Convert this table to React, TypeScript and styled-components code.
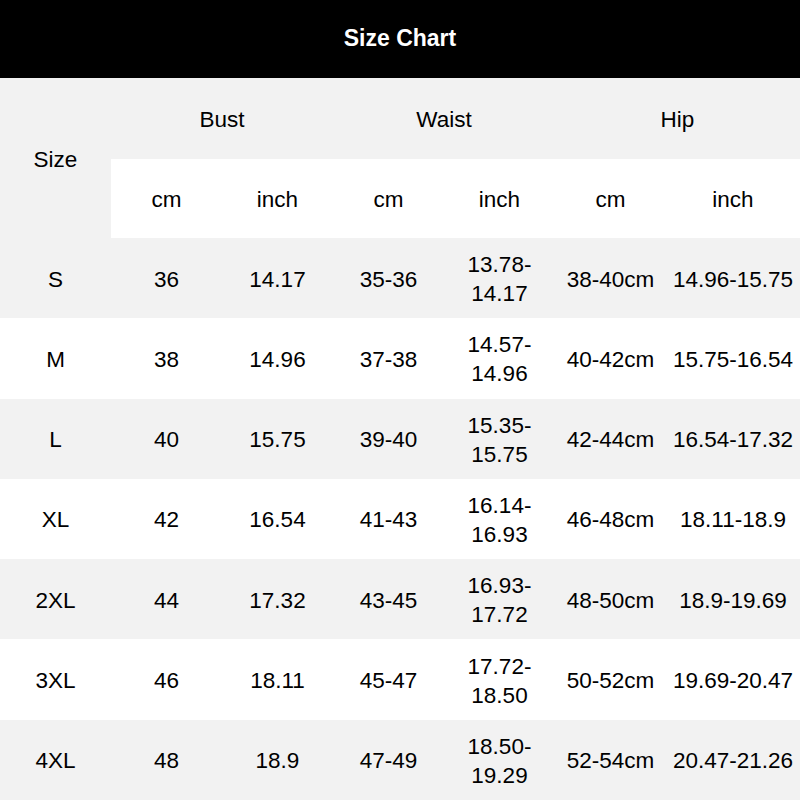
import React from "react";
import styled, { createGlobalStyle } from "styled-components";

const GlobalStyle = createGlobalStyle`
  html, body { margin: 0; padding: 0; background: #ffffff; }
  body { font-family: "Liberation Sans", Arial, sans-serif; color: #000; }
`;

const Page = styled.div`
  width: 800px;
  height: 800px;
  display: flex;
  flex-direction: column;
  overflow: hidden;
`;

const TitleBar = styled.div`
  height: 78px;
  flex: 0 0 78px;
  background: #000;
  color: #fff;
  display: flex;
  align-items: center;
  justify-content: center;
  font-size: 23px;
  font-weight: 700;
  padding-bottom: 1px;
  box-sizing: border-box;
`;

const Table = styled.div`
  flex: 1;
  display: grid;
  grid-template-columns: repeat(6, 111px) 134px;
  grid-template-rows: 81px 79px repeat(7, 1fr);
`;

const Cell = styled.div<{ $shade: boolean; $span?: number; $rows?: number }>`
  background: ${(p) => (p.$shade ? "#f2f2f2" : "#ffffff")};
  grid-column: span ${(p) => p.$span ?? 1};
  grid-row: span ${(p) => p.$rows ?? 1};
  display: flex;
  align-items: center;
  justify-content: center;
  text-align: center;
  font-size: 22.5px;
  line-height: 29px;
  white-space: nowrap;
  padding-top: 2px;
  box-sizing: border-box;
`;

const Lines = styled.div`
  display: flex;
  flex-direction: column;
  align-items: center;
`;

type Row = {
  size: string;
  bustCm: string;
  bustIn: string;
  waistCm: string;
  waistIn: [string, string];
  hipCm: string;
  hipIn: string;
};

const rows: Row[] = [
  { size: "S", bustCm: "36", bustIn: "14.17", waistCm: "35-36", waistIn: ["13.78-", "14.17"], hipCm: "38-40cm", hipIn: "14.96-15.75" },
  { size: "M", bustCm: "38", bustIn: "14.96", waistCm: "37-38", waistIn: ["14.57-", "14.96"], hipCm: "40-42cm", hipIn: "15.75-16.54" },
  { size: "L", bustCm: "40", bustIn: "15.75", waistCm: "39-40", waistIn: ["15.35-", "15.75"], hipCm: "42-44cm", hipIn: "16.54-17.32" },
  { size: "XL", bustCm: "42", bustIn: "16.54", waistCm: "41-43", waistIn: ["16.14-", "16.93"], hipCm: "46-48cm", hipIn: "18.11-18.9" },
  { size: "2XL", bustCm: "44", bustIn: "17.32", waistCm: "43-45", waistIn: ["16.93-", "17.72"], hipCm: "48-50cm", hipIn: "18.9-19.69" },
  { size: "3XL", bustCm: "46", bustIn: "18.11", waistCm: "45-47", waistIn: ["17.72-", "18.50"], hipCm: "50-52cm", hipIn: "19.69-20.47" },
  { size: "4XL", bustCm: "48", bustIn: "18.9", waistCm: "47-49", waistIn: ["18.50-", "19.29"], hipCm: "52-54cm", hipIn: "20.47-21.26" },
];

const units = ["cm", "inch", "cm", "inch", "cm", "inch"];

export default function App() {
  return (
    <>
      <GlobalStyle />
      <Page>
        <TitleBar>Size Chart</TitleBar>
        <Table>
          <Cell $shade $rows={2}>Size</Cell>
          <Cell $shade $span={2}>Bust</Cell>
          <Cell $shade $span={2}>Waist</Cell>
          <Cell $shade $span={2}>Hip</Cell>
          {units.map((u, i) => (
            <Cell key={`u${i}`} $shade={false}>{u}</Cell>
          ))}
          {rows.map((r, i) => {
            const shade = i % 2 === 0;
            return (
              <React.Fragment key={r.size}>
                <Cell $shade={shade}>{r.size}</Cell>
                <Cell $shade={shade}>{r.bustCm}</Cell>
                <Cell $shade={shade}>{r.bustIn}</Cell>
                <Cell $shade={shade}>{r.waistCm}</Cell>
                <Cell $shade={shade}>
                  <Lines>
                    <span>{r.waistIn[0]}</span>
                    <span>{r.waistIn[1]}</span>
                  </Lines>
                </Cell>
                <Cell $shade={shade}>{r.hipCm}</Cell>
                <Cell $shade={shade}>{r.hipIn}</Cell>
              </React.Fragment>
            );
          })}
        </Table>
      </Page>
    </>
  );
}
